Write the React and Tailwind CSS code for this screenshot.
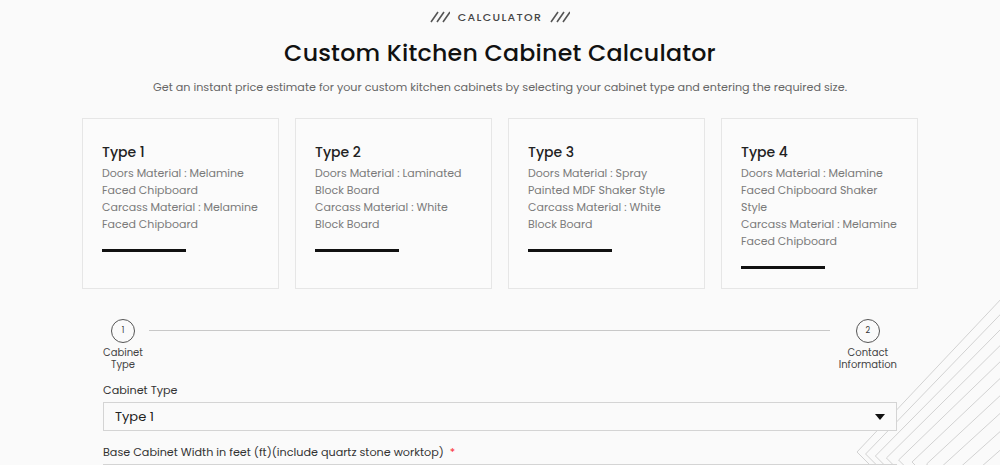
const types = [
  {
    name: 'Type 1',
    lines: ['Doors Material : Melamine Faced Chipboard', 'Carcass Material : Melamine Faced Chipboard'],
  },
  {
    name: 'Type 2',
    lines: ['Doors Material : Laminated Block Board', 'Carcass Material : White Block Board'],
  },
  {
    name: 'Type 3',
    lines: ['Doors Material : Spray Painted MDF Shaker Style', 'Carcass Material : White Block Board'],
  },
  {
    name: 'Type 4',
    lines: ['Doors Material : Melamine Faced Chipboard Shaker Style', 'Carcass Material : Melamine Faced Chipboard'],
  },
]

function Slashes() {
  return (
    <svg width="20" height="12" viewBox="0 0 20 12" className="text-[#555]">
      <path d="M1 11 L8 1 M7 11 L14 1 M13 11 L20 1" stroke="currentColor" strokeWidth="1.6" fill="none" />
    </svg>
  )
}

function Chevrons() {
  // nested chevrons in the bottom-right corner
  const rows = Array.from({ length: 10 }, (_, i) => i)
  return (
    <svg className="absolute right-0 bottom-0 pointer-events-none" width="170" height="185" viewBox="0 0 170 185">
      {rows.map((i) => {
        const x = 27 + i * 8 + i * i * 0.6
        const y = 172 + i * 2
        return (
          <path
            key={i}
            d={`M${x} ${y} L${x + y - 10 + i * 4} 0 M${x} ${y} L${x + 40} ${y + 40}`}
            stroke="#d2d2d2"
            strokeWidth="1"
            fill="none"
          />
        )
      })}
    </svg>
  )
}

function Step({ num, label }) {
  return (
    <div className="flex flex-col items-center">
      <div className="w-[24px] h-[24px] rounded-full border border-[#555] flex items-center justify-center text-[8px] text-[#333]">
        {num}
      </div>
      <div className="mt-[4px] text-[10px] leading-[11.5px] text-center text-[#444]">{label}</div>
    </div>
  )
}

export default function App() {
  return (
    <div className="relative w-full h-[465px] overflow-hidden bg-[#fafafa] font-['Poppins','Open_Sans',sans-serif]">
      <Chevrons />
      <div className="relative w-[836px] mx-auto pt-[9px]">
        <div className="flex items-center justify-center gap-[8px] text-[11px] tracking-[0.12em] font-medium text-[#444]">
          <Slashes />
          <span>CALCULATOR</span>
          <Slashes />
        </div>
        <h1 className="mt-[11px] text-center text-[23.7px] leading-[32px] font-medium text-[#111] tracking-[0.01em]">
          Custom Kitchen Cabinet Calculator
        </h1>
        <p className="mt-[10px] text-center text-[11.2px] text-[#666]">
          Get an instant price estimate for your custom kitchen cabinets by selecting your cabinet type and entering the required size.
        </p>

        <div className="mt-[23px] grid grid-cols-4 gap-[16px]">
          {types.map((t) => (
            <div key={t.name} className="h-[171px] bg-[#fbfbfb] border border-[#e6e6e6] px-[19px] pt-[24px]">
              <div className="text-[14px] font-medium text-[#222] leading-[18px]">{t.name}</div>
              <div className="mt-[4px] text-[11px] leading-[17px] text-[#7a7a7a]">
                {t.lines.map((l) => (
                  <div key={l}>{l}</div>
                ))}
              </div>
              <div className="mt-[16px] w-[84px] h-[3px] bg-[#111]" />
            </div>
          ))}
        </div>

        <div className="px-[21px]">
          <div className="mt-[30px] flex items-start">
            <Step num="1" label={<>Cabinet<br />Type</>} />
            <div className="flex-1 h-px bg-[#c8c8c8] mt-[11px] ml-[6px] mr-[9px]" />
            <Step num="2" label={<>Contact<br />Information</>} />
          </div>

          <label className="block mt-[12px] text-[11.2px] text-[#333]">Cabinet Type</label>
          <div className="mt-[3px] h-[29px] border border-[#d4d4d4] bg-[#fafafa] flex items-center justify-between px-[11px]">
            <span className="text-[13px] text-[#222]">Type 1</span>
            <svg width="10" height="6" viewBox="0 0 10 6">
              <path d="M0 0 H10 L5 6 Z" fill="#111" />
            </svg>
          </div>
          <label className="block mt-[13px] text-[11.2px] text-[#333]">
            Base Cabinet Width in feet (ft)(include quartz stone worktop) <span className="text-red-500 ml-[3px]">*</span>
          </label>
          <div className="mt-[3px] h-[29px] border border-[#d4d4d4] bg-[#fafafa]" />
        </div>
      </div>
    </div>
  )
}
